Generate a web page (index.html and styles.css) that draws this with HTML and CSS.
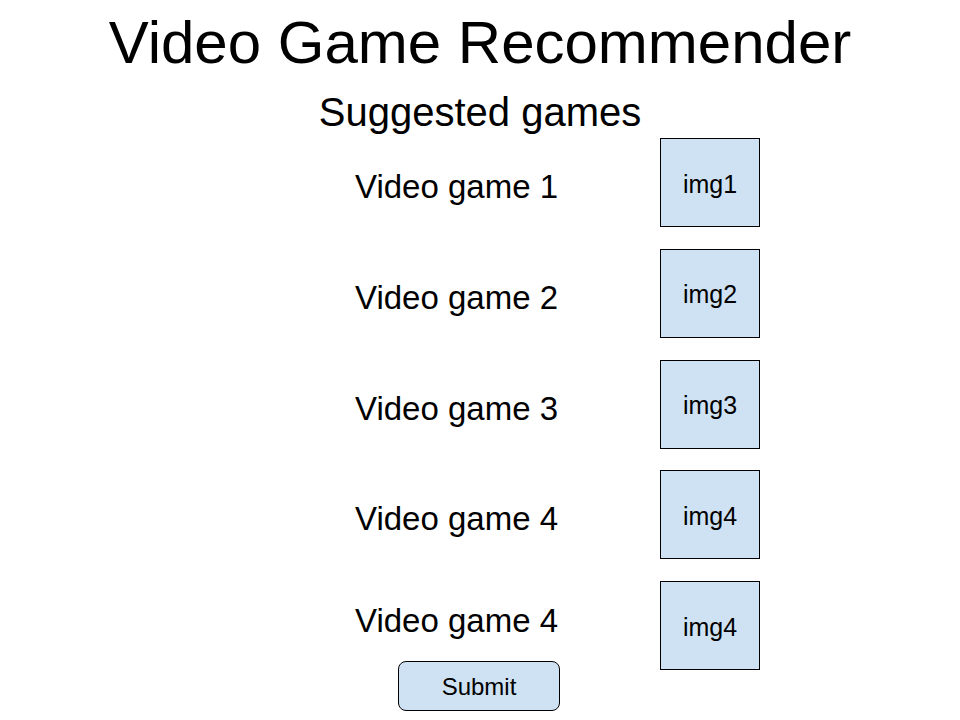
FILE: index.html
```html
<!DOCTYPE html>
<html lang="en">
<head>
  <meta charset="UTF-8">
  <title>Video Game Recommender</title>
  <link rel="stylesheet" href="styles.css">
</head>
<body>
  <h1>Video Game Recommender</h1>
  <h2>Suggested games</h2>

  <div class="games">
    <div class="row">
      <div class="name">Video game 1</div>
      <div class="thumb">img1</div>
    </div>
    <div class="row">
      <div class="name">Video game 2</div>
      <div class="thumb">img2</div>
    </div>
    <div class="row">
      <div class="name">Video game 3</div>
      <div class="thumb">img3</div>
    </div>
    <div class="row">
      <div class="name">Video game 4</div>
      <div class="thumb">img4</div>
    </div>
    <div class="row last">
      <div class="name-col">
        <div class="name">Video game 4</div>
        <button class="submit">Submit</button>
      </div>
      <div class="thumb">img4</div>
    </div>
  </div>
</body>
</html>
```

FILE: styles.css
```css
body {
  margin: 0;
  background-color: #ffffff;
  color: #000000;
  font-family: "Liberation Sans", Arial, sans-serif;
}
h1 {
  margin: 8px 0 0 0;
  font-size: 60px;
  font-weight: normal;
  line-height: 69px;
  text-align: center;
}
h2 {
  margin: 12px 0 0 0;
  font-size: 40px;
  font-weight: normal;
  line-height: 46px;
  text-align: center;
}
.games {
  display: flex;
  flex-direction: column;
  gap: 21.75px;
  margin-top: 3px;
  padding-left: 355px;
}
.row {
  display: flex;
  align-items: center;
}
.name {
  width: 305px;
  padding-top: 9px;
  font-size: 33px;
  line-height: 38px;
}
.thumb {
  box-sizing: border-box;
  width: 100px;
  height: 89px;
  display: flex;
  align-items: center;
  justify-content: center;
  padding-top: 3px;
  background-color: #cfe2f3;
  border: 1px solid #000000;
  font-size: 25px;
}
.row.last {
  align-items: flex-start;
}
.name-col {
  width: 305px;
  display: flex;
  flex-direction: column;
  align-items: flex-start;
}
.row.last .name {
  padding-top: 21px;
}
.submit {
  margin: 21px 0 0 43px;
  box-sizing: border-box;
  width: 162px;
  height: 50px;
  padding-top: 2px;
  background-color: #cfe2f3;
  border: 1px solid #000000;
  border-radius: 8px;
  font-family: "Liberation Sans", Arial, sans-serif;
  font-size: 24px;
  color: #000000;
}
```
